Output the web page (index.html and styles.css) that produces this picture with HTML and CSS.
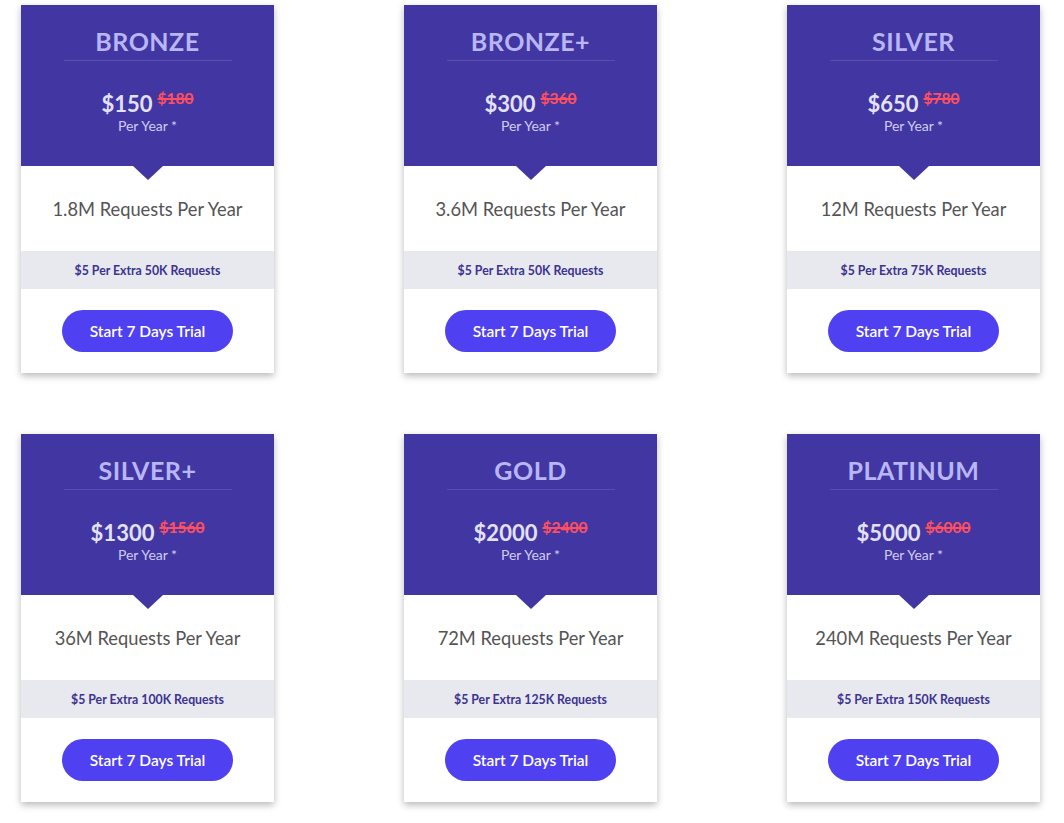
FILE: index.html
```html
<!DOCTYPE html>
<html lang="en">
<head>
<meta charset="utf-8">
<title>Pricing</title>
<link rel="stylesheet" href="styles.css">
</head>
<body>
<div class="grid">
  <div class="card">
    <div class="head">
      <div class="name">BRONZE</div>
      <div class="price"><span class="now">$150</span><span class="old">$180</span></div>
      <div class="per">Per Year *</div>
    </div>
    <div class="req">1.8M Requests Per Year</div>
    <div class="extra">$5 Per Extra 50K Requests</div>
    <div class="cta"><button class="btn">Start 7 Days Trial</button></div>
  </div>
  <div class="card">
    <div class="head">
      <div class="name">BRONZE+</div>
      <div class="price"><span class="now">$300</span><span class="old">$360</span></div>
      <div class="per">Per Year *</div>
    </div>
    <div class="req">3.6M Requests Per Year</div>
    <div class="extra">$5 Per Extra 50K Requests</div>
    <div class="cta"><button class="btn">Start 7 Days Trial</button></div>
  </div>
  <div class="card">
    <div class="head">
      <div class="name">SILVER</div>
      <div class="price"><span class="now">$650</span><span class="old">$780</span></div>
      <div class="per">Per Year *</div>
    </div>
    <div class="req">12M Requests Per Year</div>
    <div class="extra">$5 Per Extra 75K Requests</div>
    <div class="cta"><button class="btn">Start 7 Days Trial</button></div>
  </div>
  <div class="card">
    <div class="head">
      <div class="name">SILVER+</div>
      <div class="price"><span class="now">$1300</span><span class="old">$1560</span></div>
      <div class="per">Per Year *</div>
    </div>
    <div class="req">36M Requests Per Year</div>
    <div class="extra">$5 Per Extra 100K Requests</div>
    <div class="cta"><button class="btn">Start 7 Days Trial</button></div>
  </div>
  <div class="card">
    <div class="head">
      <div class="name">GOLD</div>
      <div class="price"><span class="now">$2000</span><span class="old">$2400</span></div>
      <div class="per">Per Year *</div>
    </div>
    <div class="req">72M Requests Per Year</div>
    <div class="extra">$5 Per Extra 125K Requests</div>
    <div class="cta"><button class="btn">Start 7 Days Trial</button></div>
  </div>
  <div class="card">
    <div class="head">
      <div class="name">PLATINUM</div>
      <div class="price"><span class="now">$5000</span><span class="old">$6000</span></div>
      <div class="per">Per Year *</div>
    </div>
    <div class="req">240M Requests Per Year</div>
    <div class="extra">$5 Per Extra 150K Requests</div>
    <div class="cta"><button class="btn">Start 7 Days Trial</button></div>
  </div>
</div>
</body>
</html>
```

FILE: styles.css
```css
html, body {
  margin: 0;
  padding: 0;
  background: #ffffff;
  font-family: "Lato", "Open Sans", sans-serif;
}

.grid {
  display: grid;
  grid-template-columns: repeat(3, 253px);
  column-gap: 130px;
  row-gap: 61px;
  padding: 5px 0 21px 21px;
}

.card {
  background: #ffffff;
  height: 368px;
  display: flex;
  flex-direction: column;
  box-shadow: 0 3px 7px rgba(0, 0, 0, 0.28);
}

.head {
  position: relative;
  background: #4236a2;
  height: 161px;
  box-sizing: border-box;
  padding-top: 21px;
  text-align: center;
}

.head::after {
  content: "";
  position: absolute;
  left: 50%;
  bottom: -14px;
  margin-left: -15px;
  border-left: 15px solid transparent;
  border-right: 15px solid transparent;
  border-top: 14px solid #4236a2;
}

.name {
  color: #b8b6f6;
  font-size: 25px;
  font-weight: 700;
  letter-spacing: 0.5px;
  line-height: 30px;
  width: 168px;
  margin: 0 auto;
  padding-bottom: 4px;
  border-bottom: 1px solid rgba(255, 255, 255, 0.12);
}

.price {
  margin-top: 29px;
  display: flex;
  justify-content: center;
  align-items: flex-start;
  gap: 5px;
}

.now {
  color: #e3e2fb;
  font-size: 22px;
  font-weight: 700;
  line-height: 28px;
}

.old {
  color: #ff4f5e;
  font-size: 15.5px;
  font-weight: 700;
  line-height: 16px;
  text-decoration: line-through;
  text-decoration-thickness: 1.5px;
}

.per {
  color: #cfcdf4;
  font-size: 14px;
  line-height: 16px;
}

.req {
  height: 85px;
  box-sizing: border-box;
  padding-top: 32px;
  text-align: center;
  color: #545454;
  font-size: 18.3px;
  line-height: 22px;
}

.extra {
  height: 38px;
  background: #e8e8ef;
  display: flex;
  align-items: center;
  justify-content: center;
  color: #3b3390;
  font-size: 12.3px;
  font-weight: 700;
}

.cta {
  flex: 1;
  display: flex;
  align-items: center;
  justify-content: center;
}

.btn {
  width: 171px;
  height: 42px;
  border: 0;
  border-radius: 21px;
  background: #4f40f2;
  color: #ffffff;
  font-family: inherit;
  font-size: 15.5px;
  font-weight: 600;
  cursor: pointer;
}
```
